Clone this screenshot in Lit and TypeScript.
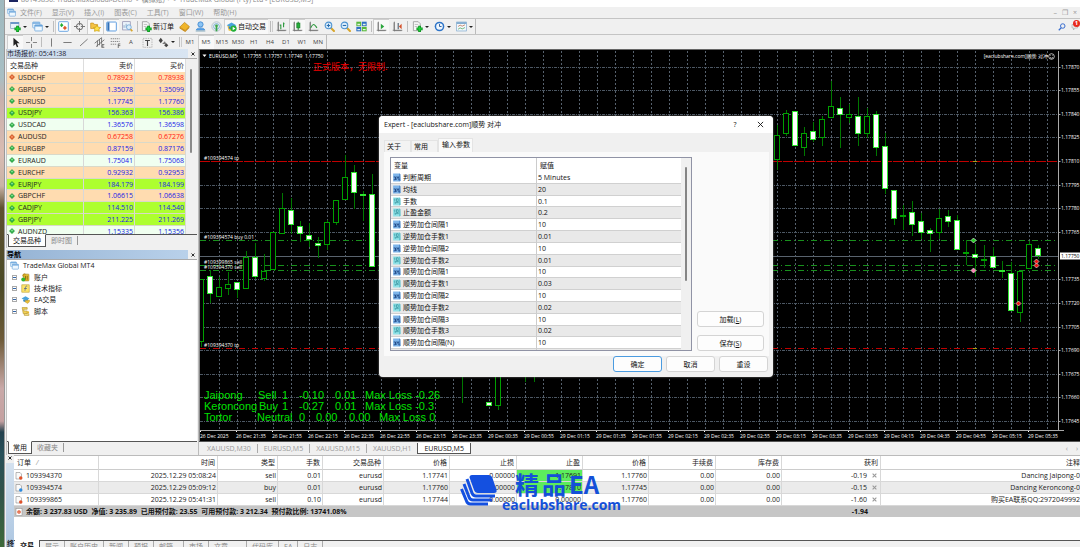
import { LitElement, html, svg, css, nothing } from "lit";
import { customElement } from "lit/decorators.js";
import { classMap } from "lit/directives/class-map.js";

const base = css`
  *, *::before, *::after { box-sizing: border-box; }
  svg { display: block; }
  button { font: inherit; color: inherit; margin: 0; padding: 0; border: 0; background: none; white-space: nowrap; }
  table { border-collapse: separate; border-spacing: 0; table-layout: fixed; width: 100%; }
  th, td { padding: 0; font-weight: inherit; text-align: left; white-space: nowrap; overflow: hidden; }
`;

/* ---------- icons, drawn on a 16 x 16 grid ---------- */
const axes = svg`<path d="M3 2v12h11M1 13.5h14M3.500 1v14" fill="none" stroke="#777" stroke-width="1.2"/>`;
const winPair = svg`
  <rect x="1" y="1.500" width="10.500" height="8.500" rx="1" fill="#e6f3fd" stroke="#6ba6dc"/><path d="M1 3h10.500" stroke="#6ba6dc" stroke-width="2"/>
  <rect x="4" y="5.500" width="11" height="9" rx="1" fill="#eef8ff" stroke="#5a9ad6"/><path d="M4 7h11" stroke="#5a9ad6" stroke-width="2"/>`;
const plus = svg`<path d="M11 7v9M6.500 11.500h9" stroke="#0a8f1c" stroke-width="4"/><path d="M11 8v7M7.500 11.500h7" stroke="#1ed13a" stroke-width="2"/>`;
const page = svg`<path d="M2 1h7l3 3v10H2z" fill="#f6f6f6" stroke="#888"/><path d="M4 5h5M4 8h4" stroke="#aaa"/>`;
const lens = (sign: unknown) => svg`
  <path d="M9.500 9.500l5 5" stroke="#d8a62c" stroke-width="3" stroke-linecap="round"/>
  <circle cx="6.500" cy="6.500" r="4.800" fill="#d9ecfb" stroke="#4d92d0" stroke-width="1.600"/>${sign}`;
const cap = svg`<path d="M1 6l7-4 7 4-6 4z" fill="#4aa3dc"/><path d="M4 8v3c3 2 6 1 8-1V7L9 10z" fill="#2f83bd"/>`;

const ICONS: Record<string, unknown> = {
  app: winPair,
  newChart: svg`<rect x="1" y="2" width="12" height="9" fill="#e8f2fb" stroke="#7b9bc0"/><path d="M1 3h12" stroke="#5f8fc4" stroke-width="2.500"/>${plus}`,
  profiles: winPair,
  market: svg`<rect x="1" y="1" width="14" height="14" rx="1" fill="#fff" stroke="#69a5e2" stroke-width="1.400"/><path d="M5 3l3 3-3 3-2-3z" fill="#25b035"/><path d="M10 7l3 3-3 3-3-3z" fill="#e05a2a"/>`,
  target: svg`<circle cx="8" cy="8" r="4.500" fill="none" stroke="#777" stroke-width="1.500"/><path d="M8 0v6M8 10v6M0 8h6M10 8h6" stroke="#777" stroke-width="1.500"/>`,
  navigator: svg`<path d="M1 3h4l1 2h5v6H1z" fill="#f5c344" stroke="#c8901c"/><path d="M10 6l2 3 3.500.5-2.500 2 .5 3.500-3.500-1-3.500 1 .5-3.500-2-2 3.500-.5z" fill="#ffe14a" stroke="#c89a10"/>`,
  panel: svg`<rect x="1" y="1.500" width="14" height="13" rx="1" fill="#fff" stroke="#5b9be0" stroke-width="1.400"/><path d="M3.500 2v12" stroke="#2e6fb8" stroke-width="3"/>`,
  tester: svg`<rect x="1" y="1" width="11" height="12" fill="#eaf3fb" stroke="#88a"/><path d="M3 10V6M6 10V4M9 10V6" stroke="#6b8fb5"/><circle cx="10" cy="9" r="3.500" fill="#d9ecfb" stroke="#5b9bd0"/><path d="M12.500 12l2.500 3" stroke="#d8a62c" stroke-width="2.500"/>`,
  order: svg`${page}${plus}`,
  book: svg`<path d="M1 9l7-7 7 6-6 6z" fill="#f0b52a" stroke="#b9800f"/><path d="M1 9l8 5 6-6v2l-6 6-8-5z" fill="#c98a14"/>`,
  people: svg`<circle cx="8" cy="5" r="3.800" fill="#8cc4f4" stroke="#3b86cf" stroke-width="1.200"/><path d="M2 13c0-4 12-4 12 0z" fill="#62aaf0" stroke="#3b86cf"/><path d="M1 14.500h14" stroke="#8ab" stroke-width="1.500"/>`,
  signal: svg`<circle cx="8" cy="8" r="6.800" fill="none" stroke="#b3c3cc" stroke-width="1.400"/><circle cx="8" cy="8" r="4.200" fill="none" stroke="#76b0d6" stroke-width="1.400"/><circle cx="8" cy="7" r="2" fill="#3aa648"/><path d="M8 8v7" stroke="#3aa648" stroke-width="2.500"/>`,
  auto: svg`<path d="M2 7h9v7H4z" fill="#f0c13a"/>${cap}<circle cx="11" cy="11" r="4.500" fill="#1fae35"/><path d="M9.700 8.500v5l4-2.500z" fill="#fff"/>`,
  bars: svg`${axes}<path d="M7 5v7M11 2v7M7 6H5.500M12.500 4H11" stroke="#2f9a40" stroke-width="1.600" fill="none"/>`,
  candles: svg`${axes}<path d="M9 1v12" stroke="#167c27" stroke-width="1.400"/><rect x="7" y="3" width="4.500" height="7" fill="#25b03a" stroke="#167c27"/>`,
  line: svg`${axes}<path d="M4 10c3-7 5-6 9 0" stroke="#2f9a40" stroke-width="1.600" fill="none"/>`,
  zoomIn: lens(svg`<path d="M6.500 4v5M4 6.500h5" stroke="#2b6fb0" stroke-width="1.500"/>`),
  zoomOut: lens(svg`<path d="M4 6.500h5" stroke="#2b6fb0" stroke-width="1.500"/>`),
  tile: svg`<rect x=".5" y="1" width="7" height="6.500" fill="#58b83c"/><rect x="8.500" y="1" width="7" height="6.500" fill="#2f6fc4"/><rect x=".5" y="8.500" width="7" height="6.500" fill="#2f6fc4"/><rect x="8.500" y="8.500" width="7" height="6.500" fill="#58b83c"/><path d="M2 5h4M10 5h4M2 12.500h4M10 12.500h4" stroke="#e6f4e2" stroke-width="2"/>`,
  shift: svg`${axes}<path d="M7 4v8l5-4z" fill="#2ba53c"/>`,
  shiftEnd: svg`${axes}<path d="M9 3v9" stroke="#456" stroke-width="1.500"/><path d="M14 4v8l-4-4z" fill="#d4512a"/>`,
  indicator: svg`${page}${plus}`,
  clock: svg`<circle cx="8" cy="8" r="7" fill="#2d74c8"/><circle cx="8" cy="8" r="4.800" fill="#eef6fd"/><path d="M8 4.500V8h3" stroke="#2d5f9c" stroke-width="1.400" fill="none"/>`,
  template: svg`<rect x="1" y="1.500" width="14" height="13" fill="#f4f9fd" stroke="#7aa6cc"/><path d="M1 3h14" stroke="#7aa6cc" stroke-width="2.500"/><path d="M3 8l3-2 3 1.500 4-2" stroke="#b05c3a" fill="none"/><path d="M3 12l3-2 3 1.500 4-2" stroke="#3d9a4a" fill="none"/>`,
  cursor: svg`<path d="M5 1v12l3-3 2 5 2-1-2-5h4z" fill="#222"/>`,
  cross: svg`<path d="M8 0v6M8 10v6M0 8h6M10 8h6" stroke="#777" stroke-width="1.300"/>`,
  vline: svg`<path d="M8 2v12" stroke="#777" stroke-width="1.400"/>`,
  hline: svg`<path d="M2 8h12" stroke="#777" stroke-width="1.400"/>`,
  trend: svg`<path d="M3 13L14 3" stroke="#777" stroke-width="1.400"/>`,
  channel: svg`<path d="M1 9l10-8M3 14L15 4M5 5v9M8 3v9M11 1v9" stroke="#666" stroke-width="1.200"/><path d="M11 11h4M11 13h3M11 15h4M11.500 11v4" stroke="#444"/>`,
  fibo: svg`<path d="M1 2.500h13M1 6.500h13M1 10.500h9" stroke="#777" stroke-width="1.200" stroke-dasharray="2 1"/><path d="M12 10h3M12 12.500h3M12 10v6" stroke="#444"/>`,
  label: svg`<rect x="1.500" y="2" width="13" height="13" fill="none" stroke="#999" stroke-dasharray="2 1.500"/><path d="M4.500 5h7M8 5v8" stroke="#444" stroke-width="1.600"/>`,
  arrows: svg`<path d="M4 1l3 4-3 4-3-4z" fill="#444"/><path d="M6 10l4-4 2 4z" fill="#777"/><path d="M12 9l3 3-3 3-3-3z" fill="#444"/>`,
  search: svg`<circle cx="9.500" cy="6" r="4.500" fill="none" stroke="#3b6fd0" stroke-width="2"/><path d="M6.500 9.500l-5 5" stroke="#3b6fd0" stroke-width="2.500"/>`,
  chat: svg`<path d="M2 3h11v7H8l-3 4v-4H2z" fill="#e9e9e9" stroke="#999"/>`,
  accounts: svg`<circle cx="6" cy="4.500" r="3" fill="#e8b530" stroke="#9b7412"/><rect x="5" y="2" width="9" height="12" rx="1" fill="#e8c02e" stroke="#9b7412"/><path d="M8 5v7M11 5v7" stroke="#7a5b0d" stroke-width="1.400"/><circle cx="4" cy="11.500" r="3.500" fill="#2db52f"/>`,
  indicators: svg`<rect x="1.500" y="1.500" width="13" height="13" fill="#fbe36a" stroke="#b8951c"/><path d="M11 4c-3-1-3 1-4 8M5.500 8h5" stroke="#4a5d8a" stroke-width="1.300" fill="none"/>`,
  experts: svg`${cap}<path d="M7 10l8-1v3l-3 3-4-2z" fill="#eabf36" stroke="#a98012" stroke-width=".6"/>`,
  scripts: svg`<path d="M2 1h9v3H5v3h6v5H4z" fill="#f3d35a" stroke="#a98a22"/><path d="M6 12h8v3H6z" fill="#ffe98e" stroke="#a98a22"/><circle cx="12.500" cy="9.500" r="2" fill="#e5b62f"/>`,
  int: svg`<path d="M2 1h12l1 12-2 2H2z" fill="#7db4ea"/><path d="M13 1l2 1v12l-2 1z" fill="#3f7cc0"/><path d="M3 7h3v5M6 7v5H3M7.500 7h2.500l-2 5M13 7h-2l2 5h-2" stroke="#173f7d" stroke-width="1.300" fill="none"/>`,
  dbl: svg`<path d="M2 1h12l1 12-2 2H2z" fill="#8fe2e8"/><path d="M13 1l2 1v12l-2 1z" fill="#4fb6c2"/><path d="M4 4l1-1v5M8 3h3v5H8zM12 10H5l1 2" stroke="#25838f" stroke-width="1.100" fill="none"/>`,
  docSell: svg`<path d="M2 1h8l3 3v10H2z" fill="#fafafa" stroke="#777"/><circle cx="11.500" cy="12" r="3.500" fill="#e0522a"/>`,
  docBuy: svg`<path d="M2 1h8l3 3v10H2z" fill="#fafafa" stroke="#777"/><circle cx="11.500" cy="12" r="3.500" fill="#2b8be0"/>`,
  balance: svg`<rect x="2" y="1" width="12" height="14" fill="#fff" stroke="#888"/><circle cx="8" cy="8" r="3.600" fill="#e0522a"/><circle cx="8" cy="8" r="1.200" fill="#fff"/>`,
  up: svg`<path d="M8 1l7 7-7 7-7-7z" fill="#2fb24a" stroke="#137029"/><path d="M8 4l3 3-3 2-3-2z" fill="#8ce69a"/>`,
  down: svg`<path d="M8 1l7 7-7 7-7-7z" fill="#e2602e" stroke="#a03410"/><path d="M8 5l3 3-3 2-3-2z" fill="#ffae7c"/>`,
};
const icon = (name: string) => html`<svg class="ic" viewBox="0 0 16 16" aria-hidden="true">${ICONS[name]}</svg>`;
const cross = () => html`<svg class="x" viewBox="0 0 8 8" aria-hidden="true"><path d="M1 1l6 6M7 1L1 7" stroke="currentColor" stroke-width="1.700"/></svg>`;

/* ---------- toolbars ---------- */
type Tool = { k: "b" | "caret" | "sep" | "grip" | "end" | "text" | "tf"; icon?: string; on?: boolean; label?: string };
const b = (i: string, on = false): Tool => ({ k: "b", icon: i, on });
const caret: Tool = { k: "caret" };
const sep: Tool = { k: "sep" };
const grip: Tool = { k: "grip" };

const MAIN_TOOLS: Tool[] = [
  b("newChart"), caret, b("profiles"), caret, sep,
  b("market", true), b("target"), b("navigator", true), b("panel", true), b("tester"), sep,
  { k: "text", icon: "order", label: "新订单" }, b("book"), b("people"), b("signal"),
  { k: "text", icon: "auto", label: "自动交易", on: true }, grip,
  b("bars"), b("candles", true), b("line"), b("zoomIn"), b("zoomOut"), b("tile"), sep,
  b("shift", true), b("shiftEnd"), sep, b("indicator"), caret, b("clock"), caret, b("template"), caret, { k: "end" },
];
const DRAW_TOOLS: Tool[] = [
  b("cursor", true), b("cross"), sep, b("vline"), b("hline"), b("trend"), b("channel"), b("fibo"),
  { k: "tf", label: "A" }, b("label"), b("arrows"), caret, grip,
  ...["M1", "M5", "M15", "M30", "H1", "H4", "D1", "W1", "MN"].map((label): Tool => ({ k: "tf", label, on: label === "M5" })),
  { k: "end" },
];

@customElement("tool-strip")
class ToolStrip extends LitElement {
  static properties = { tools: { attribute: false } };
  declare tools: Tool[];
  static styles = [base, css`
    :host { display: flex; align-items: stretch; }
    .b { width: 16px; display: flex; align-items: center; justify-content: center; }
    .ic { width: 11px; height: 11px; }
    .on { background: #f8f8f8; box-shadow: inset 1px 1px 0 #cfcfcf; }
    .caret { width: 6px; display: flex; align-items: center; }
    .caret::before { content: ""; border: 2px solid transparent; border-top-color: #222; border-bottom: 0; }
    .sep { width: 1px; margin: 2px 1px 2px 2px; background: #bdbdbd; }
    .grip { width: 3px; margin: 2px 0 2px 2px; border-left: 1px solid #bbb; border-right: 1px solid #ccc; }
    .end { width: 1px; background: #bbb; }
    .text { display: flex; align-items: center; gap: 1px; padding: 0 2px; color: #111; }
    .tf { width: 16px; font-size: 6px; color: #444; text-align: center; }
  `];
  render() {
    return this.tools.map((t) => {
      const cls = classMap({ [t.k]: true, on: !!t.on });
      if (t.k === "sep" || t.k === "grip" || t.k === "end") return html`<i class=${cls}></i>`;
      return html`<button class=${cls} aria-label=${t.label ?? t.icon ?? "menu"}>${t.icon ? icon(t.icon) : nothing}${t.label ?? nothing}</button>`;
    });
  }
}

/* ---------- market watch and navigator ---------- */
const QUOTES = [
  ["USDCHF", "0.78923", "0.78938", "sand", "down"], ["GBPUSD", "1.35078", "1.35099", "sand", "up"],
  ["EURUSD", "1.17745", "1.17760", "sand", "up"], ["USDJPY", "156.363", "156.386", "lime", "up"],
  ["USDCAD", "1.36576", "1.36598", "mint", "up"], ["AUDUSD", "0.67258", "0.67276", "sand", "down"],
  ["EURGBP", "0.87159", "0.87176", "sand", "up"], ["EURAUD", "1.75041", "1.75068", "mint", "up"],
  ["EURCHF", "0.92932", "0.92953", "sand", "up"], ["EURJPY", "184.179", "184.199", "lime", "up"],
  ["GBPCHF", "1.06615", "1.06638", "sand", "up"], ["CADJPY", "114.510", "114.540", "lime", "up"],
  ["GBPJPY", "211.225", "211.269", "lime", "up"], ["AUDNZD", "1.15335", "1.15356", "mint", "up"],
];
const TREE = [["accounts", "账户"], ["indicators", "技术指标"], ["experts", "EA交易"], ["scripts", "脚本"]];

@customElement("side-panels")
class SidePanels extends LitElement {
  static styles = [base, css`
    :host { display: flex; flex-direction: column; gap: 2px; padding: 0 1px; background: #f0f0f0; border-right: 1px solid #bbb; }
    section { display: flex; flex-direction: column; border-left: 1px solid #c4c4c4; }
    .market { height: 199px; }
    .nav { flex: 1; min-height: 0; }
    header { display: flex; justify-content: space-between; height: 9px; line-height: 9px; color: #223; }
    header h2 { flex: 1; margin: 0; font-size: 7px; font-weight: 400; background: linear-gradient(90deg, #c9d9ea, #d9e5f2); }
    .nav header h2 { background: linear-gradient(90deg, #95b3d4, #b9d1ea); font-weight: 600; color: #000; }
    .close { width: 9px; display: flex; align-items: center; justify-content: center; color: #111; }
    .x { width: 4px; height: 4px; }
    .body { flex: 1; min-height: 0; overflow: hidden; border-top: 1px solid #aaa; border-bottom: 1px solid #555; display: flex; align-items: flex-start; background: #fff; }
    .market table { flex: 1; height: 179px; color: #222; }
    .market .scroll { flex: none; width: 11px; align-self: stretch; background: #f0f0f0; padding: 10px 5px 0 4px; }
    .scroll i { display: block; height: 84px; background: #8a8a8a; border-radius: 1px; width: 2px; }
    .market thead th { height: 13px; background: #fff; border-right: 1px solid #ddd; padding-left: 3px; }
    .market td { border-right: 1px solid #d8d8d8; border-bottom: 1px solid #d9d9c9; line-height: 9px; }
    .market .n { text-align: right; padding-right: 1px; width: 51px; }
    .market td.n { color: #2020e8; }
    .market .down td.n { color: #ff2010; }
    .sand td { background: #ffdcb0; } .lime td { background: #adff2f; } .mint td { background: #f0fff0; }
    .sym { display: flex; align-items: center; gap: 3px; padding-left: 2px; }
    .sym .ic { width: 6px; height: 6px; }
    .tabs { display: flex; height: 13px; padding-left: 1px; color: #888; line-height: 11px; }
    .tabs button { padding: 0 5px; height: 11px; }
    .tabs .on { background: #fff; color: #111; border: 1px solid #555; border-top-color: #fff; margin-top: -1px; height: 13px; padding: 0 4px; }
    .tabs .off { border-right: 1px solid #999; margin: 1px 0; height: 9px; line-height: 9px; }
    ul { list-style: none; margin: 0; padding: 0 0 0 3px; display: grid; grid-auto-rows: 1fr; height: 57px; color: #222; }
    li { display: flex; align-items: center; gap: 4px; }
    li .ic { width: 9px; height: 9px; }
    .exp { width: 5px; height: 5px; margin-left: 2px; border: 1px solid #aaa; background: linear-gradient(#36a,#36a) center / 3px 1px no-repeat #fff; }
  `];
  render() {
    return html`
      <section class="market">
        <header><h2>市场报价: 05:41:38</h2><button class="close" aria-label="关闭">${cross()}</button></header>
        <div class="body">
          <table>
            <thead><tr><th>交易品种</th><th class="n">卖价</th><th class="n">买价</th></tr></thead>
            <tbody>${QUOTES.map(([s, bid, ask, tone, dir]) => html`
              <tr class="${tone} ${dir}"><td><span class="sym">${icon(dir)}${s}</span></td><td class="n">${bid}</td><td class="n">${ask}</td></tr>`)}</tbody>
          </table>
          <div class="scroll"><i></i></div>
        </div>
        <nav class="tabs"><button class="on">交易品种</button><button class="off">即时图</button></nav>
      </section>
      <section class="nav">
        <header><h2>导航</h2><button class="close" aria-label="关闭">${cross()}</button></header>
        <div class="body">
          <ul>
            <li>${icon("app")}TradeMax Global MT4</li>
            ${TREE.map(([i, t]) => html`<li><i class="exp"></i>${icon(i)}${t}</li>`)}
          </ul>
        </div>
        <nav class="tabs"><button class="on">常用</button><button class="off">收藏夹</button></nav>
      </section>`;
  }
}

/* ---------- chart ---------- */
/* [centre, high, open/close top, open/close bottom, low, falling] */
const CANDLES: number[][] = [
  [201, 279, 279, 342, 347, 0], [210, 270, 276, 294, 303, 1], [219, 277, 287, 297, 297, 0], [228, 272, 284, 289, 295, 0],
  [237, 282, 282, 290, 298, 1], [246, 251, 257, 289, 289, 0], [255, 243, 257, 277, 279, 1], [264, 254, 271, 279, 281, 0],
  [273, 232, 232, 270, 270, 0], [282, 193, 208, 234, 234, 0], [291, 198, 210, 225, 234, 1], [300, 221, 226, 234, 242, 1],
  [309, 223, 235, 240, 247, 1], [318, 237, 243, 246, 258, 1], [327, 220, 222, 245, 250, 0], [336, 200, 200, 223, 225, 0],
  [345, 155, 177, 200, 200, 0], [354, 165, 172, 193, 209, 1], [363, 191, 194, 196, 221, 1], [372, 174, 194, 267, 267, 1],
  [462, 330, 340, 350, 403, 0], [489, 402, 402, 406, 406, 1], [498, 340, 340, 406, 410, 0], [525, 330, 340, 350, 382, 0],
  [534, 330, 340, 350, 382, 0],
  [777, 125, 135, 160, 170, 0], [786, 110, 113, 134, 136, 0], [795, 111, 111, 146, 146, 1], [804, 127, 133, 148, 156, 0],
  [813, 122, 131, 140, 142, 1], [822, 116, 119, 138, 146, 0], [831, 81, 106, 118, 118, 0], [840, 97, 108, 115, 148, 1],
  [849, 104, 114, 118, 123, 0], [858, 97, 116, 134, 146, 1], [867, 108, 116, 134, 138, 0], [876, 111, 114, 148, 156, 1],
  [885, 133, 146, 189, 194, 1], [894, 190, 190, 219, 225, 1], [903, 205, 215, 217, 230, 0], [912, 201, 212, 225, 236, 1],
  [921, 213, 221, 233, 239, 1], [930, 228, 230, 234, 252, 1], [939, 209, 218, 233, 239, 0], [948, 210, 216, 222, 227, 1],
  [957, 215, 220, 250, 250, 1], [966, 240, 252, 253, 265, 0], [975, 244, 254, 258, 277, 1], [984, 245, 259, 261, 268, 0],
  [993, 247, 256, 268, 268, 1], [1002, 261, 270, 272, 278, 1], [1011, 262, 273, 311, 311, 1], [1020, 271, 271, 313, 322, 0],
  [1029, 241, 244, 269, 269, 0], [1038, 245, 248, 256, 259, 1],
];
const TIMES = ["26 Dec 2025", ...["21:35", "21:55", "22:15", "22:35", "22:55", "23:15", "23:35"].map((t) => `26 Dec ${t}`),
  ...["00:35", "00:55", "01:15", "01:35", "01:55", "02:15", "02:35", "02:55", "03:15", "03:35", "03:55", "04:15", "04:35", "04:55", "05:15", "05:35"].map((t) => `29 Dec ${t}`)];
const PRICES = Array.from({ length: 16 }, (_, i) => (1.1787 - i * 0.00015).toFixed(5));
const gridY = (i: number) => Math.floor(67 + i * 23.64) + 0.5;

const ORDERS_TXT: [number, number, string][] = [
  [209, 58, "EURUSD,M5"], [243, 58, "1.17755"], [264, 58, "1.17757"], [284, 58, "1.17749"], [305, 58, "1.17750"],
  [204, 160, "#109394574 tp"], [204, 239, "#109394574 buy 0.01"], [204, 264, "#109399865 sell"], [204, 269, "#109394370 sell"], [204, 347, "#109394370 tp"],
];
const STATS: [number, string[], number[]][] = [
  [399, ["Jaipong", "Sell", "1", "-0.10", "0.01", "Max Loss -0.26"], [204, 258, 282, 299, 335, 365]],
  [410, ["Keroncong", "Buy", "1", "-0.27", "0.01", "Max Loss -0.3"], [204, 259, 282, 299, 335, 365]],
  [421, ["Tortor", "Neutral", "0", "0.00", "0.00", "Max Loss 0"], [204, 257, 299, 316, 349, 379]],
];

@customElement("price-chart")
class PriceChart extends LitElement {
  static styles = [base, css`
    :host { display: flex; flex-direction: column; background: #000; border-top: 1px solid #666; border-left: 1px solid #888; color: #fff; font-size: 5px; overflow: hidden; }
    .top { flex: 1; display: flex; min-height: 0; padding-top: 1px; }
    .plot { flex: 1; min-width: 0; height: 100%; }
    .axis { width: 22px; height: 100%; border-left: 1px solid #aaa; }
    .times { display: grid; grid-template-columns: repeat(24, 1fr); margin-right: 16px; height: 11px; line-height: 8px; white-space: nowrap; border-top: 1px solid #aaa; }
    .times span::before { content: ""; display: block; width: 1px; height: 1px; background: #fff; }
    text { fill: #fff; font-size: 5px; }
    .green { fill: #00e000; font-size: 11px; font-family: "Liberation Sans", Arial, sans-serif; }
    .red { fill: #f00000; font-size: 9px; font-family: "Noto Sans CJK SC", sans-serif; }
    .now { fill: #000; }
    .grid line { stroke: #56616d; stroke-dasharray: 2 2; }
    .grid .h { stroke-dasharray: 3 1 1 1; stroke: #4c5763; }
    .lv { stroke-dasharray: 6 3 1 3; fill: none; }
  `];
  render() {
    return html`
      <div class="top">
        <svg class="plot" viewBox="200 51 858 379" preserveAspectRatio="xMaxYMin slice" role="img" aria-label="EURUSD,M5">
          <g class="grid">
            ${Array.from({ length: 47 }, (_, i) => svg`<line x1=${219.5 + i * 18} x2=${219.5 + i * 18} y1="51" y2="430"/>`)}
            ${PRICES.map((_, i) => i === 4 ? nothing : svg`<line class="h" x1="200" x2="1058" y1=${gridY(i)} y2=${gridY(i)}/>`)}
          </g>
          <path d="M200 256.500H1058" stroke="#59636e"/>
          <path d="M200 161.500H1058" stroke="#c00000" stroke-dasharray="10 1"/>
          <path class="lv" d="M200 348.500H1058" stroke="#c00000"/>
          <path class="lv" d="M200 240.500H1058M200 265.500H1058M200 270.500H1058" stroke="#18901c"/>
          <path d="M973 161.500h4M973 348.500h4" stroke="#a8a010"/>
          ${CANDLES.map(([x, hi, t, bo, lo, down]) => svg`
            <path d="M${x + 0.5} ${hi}V${t}M${x + 0.5} ${bo}V${lo}" stroke="#007800"/>
            <rect x=${x - 2.5} y=${t + 0.5} width="5" height=${Math.max(bo - t - 1, 1)} fill=${down ? "#fff" : "#000"} stroke=${down ? "#2fe52f" : "#00a000"}/>`)}
          ${[[973, 240, "#20d020"], [973, 270, "#ff7ab0"], [1018, 303, "#f01010"], [1036, 261, "#f01010"], [1036, 265, "#f01010"]].map(([x, y, c]) => svg`
            <path d="M${Number(x) + 0.5} ${Number(y) - 2}l2.500 2.500-2.500 2.500-2.500-2.500z" fill=${c} stroke="#ddd" stroke-width=".7"/>`)}
          <path d="M202.500 54.500h4l-2 2.500z" fill="#fff"/>
          ${ORDERS_TXT.map(([x, y, t]) => svg`<text x=${x} y=${y}>${t}</text>`)}
          <text class="red" x="313" y="70">正式版本，无限制.</text>
          <text x="1048" y="58" text-anchor="end">[eaclubshare.com]顺势 对冲</text>
          <circle cx="1051.500" cy="56.500" r="2.800" fill="none" stroke="#fff" stroke-width=".7"/>
          <path d="M1050 57.500q1.500 1.500 3 0M1050.500 55.500v.5M1052.500 55.500v.5" fill="none" stroke="#fff" stroke-width=".7"/>
          ${STATS.map(([y, words, xs]) => words.map((w, i) => svg`<text class="green" x=${xs[i]} y=${y}>${w}</text>`))}
        </svg>
        <svg class="axis" viewBox="0 51 21 379" preserveAspectRatio="xMinYMin meet" aria-hidden="true">
          ${PRICES.map((p, i) => i === 8 ? svg`<rect x="1" y="252.500" width="20" height="7" fill="#fff"/><text class="now" x="2" y="258">1.17750</text>`
            : svg`<path d="M0 ${gridY(i)}h1.500" stroke="#aaa"/><text x="2" y=${gridY(i) + 1.5}>${p}</text>`)}
        </svg>
      </div>
      <div class="times">${TIMES.map((t) => html`<span>${t}</span>`)}</div>`;
  }
}

/* ---------- expert properties dialog ---------- */
const PARAMS = [
  ["int", "判断周期", "5 Minutes"], ["int", "均线", "20"], ["dbl", "手数", "0.1"], ["dbl", "止盈金额", "0.2"],
  ["int", "逆势加仓间隔1", "10"], ["dbl", "逆势加仓手数1", "0.01"], ["int", "逆势加仓间隔2", "10"], ["dbl", "逆势加仓手数2", "0.01"],
  ["int", "顺势加仓间隔1", "10"], ["dbl", "顺势加仓手数1", "0.03"], ["int", "顺势加仓间隔2", "10"], ["dbl", "顺势加仓手数2", "0.02"],
  ["int", "顺势加仓间隔3", "10"], ["dbl", "顺势加仓手数3", "0.02"], ["int", "顺势加仓间隔(N)", "10"], ["dbl", "顺势加仓手数(N)", "0.02"],
];

@customElement("expert-dialog")
class ExpertDialog extends LitElement {
  static styles = [base, css`
    :host { display: flex; flex-direction: column; background: #f0f0f0; border-radius: 4px; overflow: hidden; color: #111; box-shadow: 0 0 2px #888; }
    header { display: flex; align-items: center; height: 17px; background: #fff; padding: 0 8px 0 5px; }
    h1 { flex: 1; margin: 0; font-size: 7px; font-weight: 400; }
    header button { width: 26px; display: flex; justify-content: center; }
    header button:last-child { width: 10px; margin-left: 7px; }
    .x { width: 7px; height: 7px; }
    .x path { stroke-width: 1; }
    .tabs { display: flex; align-items: flex-end; padding: 4px 5px 0; height: 19px; }
    .tabs button { width: 27px; height: 12px; padding: 0 2px; text-align: left; border: 1px solid #e4e4e4; border-bottom: 0; background: #f3f3f3; }
    .tabs .on { width: 35px; height: 14px; background: #fafafa; padding: 0 3px 2px; }
    .page { flex: 1; display: flex; gap: 5px; margin: 0 4px 0 5px; padding: 5px 5px 5px 6px; background: #fafafa; min-height: 0; }
    .grid { width: 302px; border: 1px solid #9093a5; overflow: hidden; display: flex; align-items: flex-start; background: #fff; }
    table { flex: 1; height: 203px; }
    th { height: 14px; padding-left: 3px; }
    th + th, td + td { border-left: 1px solid #ccc; }
    td { border-bottom: 1px solid #d0d0d0; line-height: 9px; }
    td + td { padding-left: 1px; }
    tbody tr:nth-child(even) td { background: #e9e9e9; }
    .name { display: flex; align-items: center; gap: 2px; padding-left: 1px; }
    .ic { width: 9px; height: 9px; }
    .scroll { flex: none; width: 10px; align-self: stretch; background: #f0f0f0; padding: 9px 4px; }
    .scroll i { display: block; width: 2px; height: 114px; border-radius: 1px; background: #858585; }
    .side { flex: 1; display: flex; flex-direction: column; justify-content: flex-end; gap: 8px; }
    .btn { height: 16px; background: #fdfdfd; border: 1px solid #d4d4d4; border-radius: 3px; }
    footer { display: flex; justify-content: flex-end; gap: 4px; height: 21px; padding: 0 5px 5px; }
    footer .btn { width: 49px; }
    .ok { border-color: #4a9be0; }
  `];
  render() {
    return html`
      <header><h1>Expert - [eaclubshare.com]顺势 对冲</h1><button aria-label="帮助">?</button><button aria-label="关闭">${cross()}</button></header>
      <nav class="tabs"><button>关于</button><button>常用</button><button class="on">输入参数</button></nav>
      <div class="page">
        <div class="grid">
          <table>
            <thead><tr><th>变量</th><th>赋值</th></tr></thead>
            <tbody>${PARAMS.map(([k, n, v]) => html`<tr><td><span class="name">${icon(k)}${n}</span></td><td>${v}</td></tr>`)}</tbody>
          </table>
          <div class="scroll"><i></i></div>
        </div>
        <div class="side"><button class="btn">加载(<u>L</u>)</button><button class="btn">保存(<u>S</u>)</button></div>
      </div>
      <footer><button class="btn ok">确定</button><button class="btn">取消</button><button class="btn">重设</button></footer>`;
  }
}

/* ---------- terminal ---------- */
const TRADES = [
  ["docSell", "109394370", "2025.12.29 05:08:24", "sell", "0.01", "eurusd", "1.17741", "0.00000", "1.17691", "1.17760", "0.00", "0.00", "-0.19", "Dancing Jaipong-0"],
  ["docBuy", "109394574", "2025.12.29 05:09:12", "buy", "0.01", "eurusd", "1.17760", "0.00000", "1.17810", "1.17745", "0.00", "0.00", "-0.15", "Dancing Keroncong-0"],
  ["docSell", "109399865", "2025.12.29 05:41:31", "sell", "0.10", "eurusd", "1.17744", "0.00000", "0.00000", "1.17760", "0.00", "0.00", "-1.60", "购买EA联系QQ:2972049992"],
];
const HEADS = ["时间", "类型", "手数", "交易品种", "价格", "止损", "止盈", "价格", "手续费", "库存费", "获利", "注释"];
const COLS = [85, 119, 60, 45, 61, 66, 67, 66, 66, 67, 66, 99];

@customElement("trade-terminal")
class TradeTerminal extends LitElement {
  static styles = [base, css`
    :host { display: flex; align-items: flex-start; position: relative; background: #f0f0f0; overflow: hidden; color: #222; }
    .rail { width: 9px; height: 99px; display: flex; flex-direction: column; align-items: center; padding-top: 1px; }
    .x { width: 4px; height: 4px; }
    .rail button { color: #000; }
    .rail h2 { flex: 1; width: 8px; margin: 3px 0 0; background: linear-gradient(#d4e1ef, #a9c4e0); font-size: 7px; font-weight: 600; line-height: 8px; writing-mode: vertical-rl; text-align: right; }
    .main { flex: 1; min-width: 0; border-top: 1px solid #bbb; }
    .body { height: 85px; background: #fff; border-bottom: 1px solid #555; overflow: hidden; }
    table { height: 61px; }
    th, td { text-align: right; padding-right: 1px; line-height: 9px; border-right: 1px solid #d8d8d8; }
    th { height: 14px; padding-right: 2px; border-bottom: 1px solid #ccc; }
    td { border-bottom: 1px solid #d8d8d8; }
    th:first-child { text-align: left; padding-left: 3px; }
    th em { color: #999; padding-left: 5px; }
    th:last-child, td:last-child { padding-right: 0; border-right: 0; }
    tbody tr:nth-child(even) td { background: #ebebeb; }
    tbody td.hit, tbody tr:nth-child(even) td.hit { background: #5cec5c; }
    tbody .sum td, tbody tr.sum:nth-child(even) td { background: #c6c6c6; border: 0; font-weight: 700; color: #111; text-align: left; padding: 0; }
    tbody tr.sum:nth-child(even) td.p { text-align: right; padding-right: 13px; }
    .id { display: flex; align-items: center; gap: 3px; padding-left: 1px; white-space: pre; }
    .ic { width: 8px; height: 8px; }
    .profit { display: flex; justify-content: flex-end; align-items: center; gap: 5px; padding-right: 2px; }
    .profit .x { color: #999; width: 5px; height: 5px; }
    .tabs { display: flex; height: 13px; color: #888; padding-left: 1px; }
    .tabs button { padding: 0 5px; border-right: 1px solid #aaa; line-height: 9px; height: 11px; }
    .tabs .on { background: #fff; color: #111; font-weight: 700; margin-top: -1px; border-right-color: #555; }
    .tabs .mail { padding-right: 10px; }
    .tabs .news { padding-right: 18px; }
    .brand { position: absolute; left: 455px; top: 17px; display: flex; gap: 3px; color: #1450d8; font-weight: 700; }
    .brand svg { width: 39px; height: 34px; margin-top: 3px; }
    .brand p { margin: 0; font-size: 24px; line-height: 24px; height: 25px; padding-left: 13px; display: flex; gap: 3px; font-family: "Noto Sans CJK SC", sans-serif; }
    .brand a { display: block; font-size: 14px; line-height: 16px; color: inherit; text-decoration: none; }
  `];
  render() {
    const tabs = [["展示", ""], ["账户历史", ""], ["新闻", ""], ["预报", ""], ["邮箱", "mail"], ["市场", ""], ["文章", "news"], ["代码库", ""], ["EA", ""], ["日志", ""]];
    return html`
      <div class="rail"><button aria-label="关闭">${cross()}</button><h2>终端</h2></div>
      <div class="main">
        <div class="body">
          <table>
            <colgroup>${COLS.map((w) => html`<col width=${w}>`)}<col></colgroup>
            <thead><tr><th>订单<em>/</em></th>${HEADS.map((h) => html`<th>${h}</th>`)}</tr></thead>
            <tbody>
              ${TRADES.map(([ic, id, ...r], n) => html`<tr><td><span class="id">${icon(ic)}${id}</span></td>${r.map((c, i) =>
                i === 10 ? html`<td><span class="profit">${c}${cross()}</span></td>` : html`<td class=${classMap({ hit: i === 6 && n < 2 })}>${c}</td>`)}</tr>`)}
              <tr class="sum"><td colspan="11"><span class="id">${icon("balance")}${"余额: 3 237.83 USD  净值: 3 235.89  已用预付款: 23.55  可用预付款: 3 212.34  预付款比例: 13741.08%"}</span></td><td class="p">-1.94</td><td></td></tr>
            </tbody>
          </table>
        </div>
        <nav class="tabs"><button class="on">交易</button>${tabs.map(([t, c]) => html`<button class=${c}>${t}</button>`)}</nav>
      </div>
      <div class="brand">
        <svg viewBox="0 0 39 34" aria-hidden="true">
          <path d="M9.500 2.500Q9.500 0 12 0h17q2.500 0 3.300 2.500L36.500 15q.8 3-2.500 3H18q-3 0-4-3z" fill="#1450e0"/>
          <g fill="none" stroke="#1450e0" stroke-width="3">
            <path d="M7 4l5 14q1 3 4 3h19"/>
            <path d="M4 9l5 13q1 3 4 3h19"/>
            <path d="M1.500 14l5 12q1 3 4 3H28"/>
          </g>
        </svg>
        <div><p><span>精</span><span>品</span><span>EA</span></p><a href="#">eaclubshare.com</a></div>
      </div>`;
  }
}

/* ---------- application window ---------- */
const MENUS = ["文件(F)", "显示(V)", "插入(I)", "图表(C)", "工具(T)", "窗口(W)", "帮助(H)"];
const CHART_TABS = ["XAUUSD,M30", "EURUSD,M5", "XAUUSD,M15", "XAUUSD,H1", "EURUSD,M5"];

@customElement("app-root")
class AppRoot extends LitElement {
  static styles = [base, css`
    :host { display: flex; height: 100vh; overflow: hidden; font: 7px/9px "Open Sans", "Noto Sans CJK SC", sans-serif; color: #222; background: #f0f0f0; }
    .wall { width: 5px; background: linear-gradient(#9fb9bf 0, #a8bfc4 14%, #c8b0ac 18%, #d9bcb2 28%, #c9b3a6 34%, #5f5030 38%, #4a4a26 52%, #6d5a38 62%, #c9a9a8 71%, #c4a0a0 77%, #23414d 79%, #28505a 83%, #31524a 90%, #3d6a3a 100%); border-right: 1px solid #999; }
    .win { flex: 1; min-width: 0; display: flex; flex-direction: column; }
    .title { height: 7px; background: #fff; display: flex; align-items: flex-end; gap: 3px; overflow: hidden; padding-left: 4px; color: #888; }
    .title i { width: 9px; height: 5px; background: #1c2561; align-self: flex-start; margin-top: -3px; }
    .title span { height: 13px; line-height: 11px; white-space: pre; }
    .menu { height: 11px; display: flex; align-items: center; padding-left: 2px; color: #999; }
    .menu .ic { width: 9px; height: 9px; margin-right: 4px; }
    .menu button { margin-right: 10px; }
    .menu .ctl { margin-left: auto; display: flex; gap: 5px; padding-right: 3px; }
    .menu .ctl button { margin: 0; }
    .bar { display: flex; border-top: 1px solid #c4c4c4; padding-left: 2px; }
    .one { height: 16px; }
    .two { height: 15px; }
    .note { margin-left: auto; display: flex; align-items: center; gap: 5px; padding-right: 1px; }
    .note button { position: relative; }
    .note .ic { width: 8px; height: 8px; }
    .note b { position: absolute; right: -1px; top: -3px; width: 7px; height: 7px; border-radius: 50%; background: #e8281c; color: #fff; font-size: 6px; line-height: 7px; }
    .mid { flex: 1; min-height: 0; display: flex; }
    side-panels { width: 194px; }
    .area { flex: 1; min-width: 0; display: flex; flex-direction: column; position: relative; }
    price-chart { flex: 1; min-height: 0; }
    .tabs { height: 14px; display: flex; border-top: 1px solid #555; color: #999; padding: 1px 0 0 2px; }
    .tabs button { padding: 0 6px; line-height: 9px; border-right: 1px solid #aaa; height: 9px; margin-top: 1px; }
    .tabs .on { background: #fff; color: #111; border: 1px solid #555; border-top: 0; height: 11px; margin: 0 0 0 -1px; }
    .tabs .arr { margin-left: auto; border: 0; }
    .tabs .arr + .arr { margin-left: 0; padding: 0 2px; }
    expert-dialog { position: absolute; left: 180px; top: 67px; width: 394px; height: 261px; }
    trade-terminal { height: 92px; }
  `];
  render() {
    return html`
      <div class="wall"></div>
      <div class="win">
        <div class="title"><i></i><span>80149836: TradeMaxGlobal-Demo  -  模拟账户  -  TradeMax Global (Pty) Ltd - [EURUSD,M5]</span></div>
        <nav class="menu">${icon("app")}${MENUS.map((m) => html`<button>${m}</button>`)}
          <span class="ctl"><button>–</button><button>❐</button><button>×</button></span></nav>
        <div class="bar one"><tool-strip .tools=${MAIN_TOOLS}></tool-strip>
          <span class="note"><button aria-label="搜索">${icon("search")}</button><button>${icon("chat")}<b>1</b></button></span></div>
        <div class="bar two"><tool-strip .tools=${DRAW_TOOLS}></tool-strip></div>
        <div class="mid">
          <side-panels></side-panels>
          <div class="area">
            <price-chart></price-chart>
            <nav class="tabs">${CHART_TABS.map((t, i) => html`<button class=${classMap({ on: i === 4 })}>${t}</button>`)}
              <button class="arr">‹</button><button class="arr">›</button></nav>
            <expert-dialog role="dialog" aria-label="Expert"></expert-dialog>
          </div>
        </div>
        <trade-terminal></trade-terminal>
      </div>`;
  }
}
